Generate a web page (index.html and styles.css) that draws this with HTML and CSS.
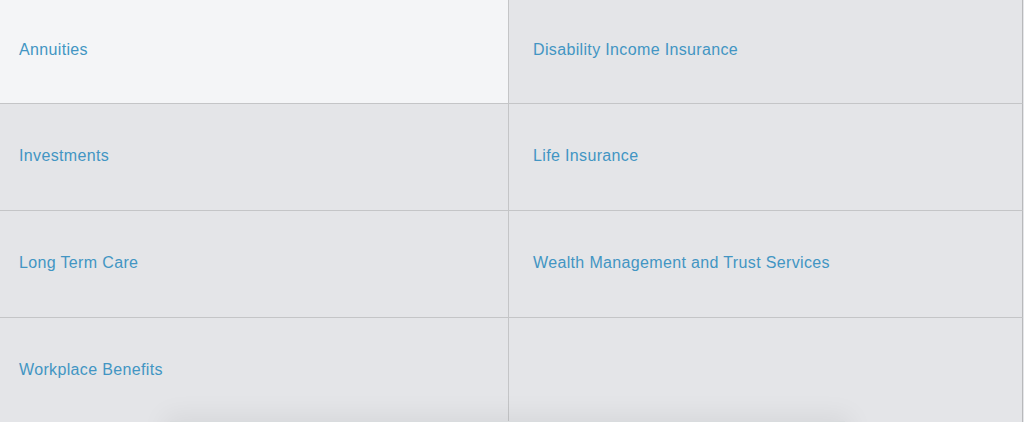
FILE: index.html
```html
<!DOCTYPE html>
<html lang="en">
<head>
<meta charset="utf-8">
<title>Products</title>
<link rel="stylesheet" href="styles.css">
</head>
<body>
<div class="menu">
	<ul class="grid">
		<li class="item active"><a href="#">Annuities</a></li>
		<li class="item"><a href="#">Disability Income Insurance</a></li>
		<li class="item"><a href="#">Investments</a></li>
		<li class="item"><a href="#">Life Insurance</a></li>
		<li class="item"><a href="#">Long Term Care</a></li>
		<li class="item"><a href="#">Wealth Management and Trust Services</a></li>
		<li class="item"><a href="#">Workplace Benefits</a></li>
		<li class="item empty"></li>
	</ul>
	<div class="shade"></div>
</div>
</body>
</html>
```
FILE: styles.css
```css
*{margin:0;padding:0;box-sizing:border-box;}
body{background:#e5e6e9;font-family:"Liberation Sans",Arial,sans-serif;overflow:hidden;}
.menu{position:relative;width:1023px;height:422px;overflow:hidden;}
.grid{list-style:none;display:grid;grid-template-columns:509px 514px;grid-template-rows:104px 107px 107px 107px;}
.item{background:#e4e5e8;border-bottom:1px solid #c4c5c7;display:flex;align-items:center;padding:0 0 3px 19px;}
.item:nth-child(odd){border-right:1px solid #c4c5c7;}
.item:nth-child(even){border-right:1px solid #b8b9bb;padding-left:24px;}
.item.active{background:#f4f5f7;}
.item a{color:#4295c3;text-decoration:none;font-size:16px;letter-spacing:0.35px;}
.shade{position:absolute;left:170px;top:421px;width:675px;height:20px;background:#d9dcde;box-shadow:0 0 26px 6px rgba(0,0,0,.06);}
```
